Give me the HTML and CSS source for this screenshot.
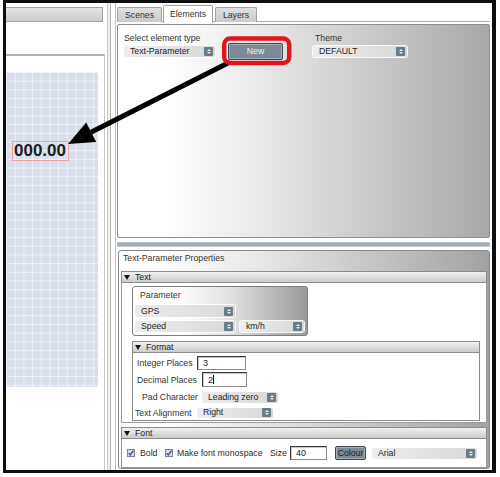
FILE: index.html
```html
<!DOCTYPE html>
<html>
<head>
<meta charset="utf-8">
<title>Overlay Editor</title>
<link rel="stylesheet" href="styles.css">
</head>
<body>
<div class="frame">
  <div class="left">
    <div class="left-bar"></div>
    <div class="left-head"></div>
    <div class="canvas-box">
      <div class="canvas-grid">
        <div class="element-label">000.00</div>
      </div>
    </div>
  </div>

  <div class="vsplit"></div>

  <div class="right">
    <div class="tabs">
      <div class="tab tab-scenes">Scenes</div>
      <div class="tab tab-elements active">Elements</div>
      <div class="tab tab-layers">Layers</div>
    </div>

    <div class="chooser">
      <div class="field field-type">
        <div class="label">Select element type</div>
        <div class="select">Text-Parameter<span class="spin"></span></div>
      </div>
      <div class="btn btn-new">New</div>
      <div class="field field-theme">
        <div class="label">Theme</div>
        <div class="select">DEFAULT<span class="spin"></span></div>
      </div>
    </div>

    <div class="hsplit"></div>

    <div class="props">
      <div class="props-title">Text-Parameter Properties</div>

      <div class="section">
        <div class="sec-head"><span class="caret"></span>Text</div>
        <div class="sec-body text-body">
          <div class="param-box">
            <div class="param-label">Parameter</div>
            <div class="select sel-gps">GPS<span class="spin"></span></div>
            <div class="param-row">
              <div class="select sel-speed">Speed<span class="spin"></span></div>
              <div class="select sel-unit">km/h<span class="spin"></span></div>
            </div>
          </div>

          <div class="format">
            <div class="sec-head"><span class="caret"></span>Format</div>
            <div class="format-body">
              <div class="frow frow-int">
                <span class="flabel">Integer Places</span>
                <div class="input">3</div>
              </div>
              <div class="frow frow-dec">
                <span class="flabel">Decimal Places</span>
                <div class="input">2<span class="text-caret"></span></div>
              </div>
              <div class="frow frow-pad">
                <span class="flabel">Pad Character</span>
                <div class="select">Leading zero<span class="spin"></span></div>
              </div>
              <div class="frow frow-align">
                <span class="flabel">Text Alignment</span>
                <div class="select">Right<span class="spin"></span></div>
              </div>
            </div>
          </div>
        </div>
      </div>

      <div class="section section-font">
        <div class="sec-head"><span class="caret"></span>Font</div>
        <div class="sec-body font-body">
          <svg class="check" width="8" height="8" viewBox="0 0 8 8"><rect x="0.5" y="0.5" width="7" height="7" fill="#d6dce9" stroke="#7b8494"/><path d="M1.7 4.1 L3.3 5.9 L6.4 1.7" fill="none" stroke="#3a48a6" stroke-width="1.3"/></svg>
          <span class="cb-label cb-bold">Bold</span>
          <svg class="check" width="8" height="8" viewBox="0 0 8 8"><rect x="0.5" y="0.5" width="7" height="7" fill="#d6dce9" stroke="#7b8494"/><path d="M1.7 4.1 L3.3 5.9 L6.4 1.7" fill="none" stroke="#3a48a6" stroke-width="1.3"/></svg>
          <span class="cb-label cb-mono">Make font monospace</span>
          <span class="size-label">Size</span>
          <div class="input input-size">40</div>
          <div class="btn btn-colour">Colour</div>
          <div class="select sel-font">Arial<span class="spin"></span></div>
        </div>
      </div>
    </div>
  </div>
</div>

<svg class="callout" width="500" height="477" viewBox="0 0 500 477">
  <line x1="230" y1="62" x2="91" y2="132.3" stroke="#000" stroke-width="5"/>
  <polygon points="68,144 96.2,142.1 86.2,122.4" fill="#000"/>
  <rect x="224.2" y="38.5" width="65" height="24.5" rx="6" ry="6" fill="none" stroke="#e3141b" stroke-width="4.5"/>
</svg>
</body>
</html>
```

FILE: styles.css
```css
* { box-sizing: border-box; }

html, body {
  margin: 0;
  padding: 0;
  background: #fff;
}

body {
  position: relative;
  width: 500px;
  height: 477px;
  overflow: hidden;
  font-family: "Liberation Sans", Arial, sans-serif;
  font-size: 8.7px;
  color: #2b2b2b;
}

/* window frame */
.frame {
  margin-left: 3px;
  width: 493px;
  height: 473px;
  border: 3px solid #0e0e0e;
  border-right-width: 4px;
  display: flex;
}

/* left: scene canvas */
.left {
  width: 99px;
  display: flex;
  flex-direction: column;
}

.left-bar {
  margin: 4px 2px 0 0;
  height: 15px;
  border: 1px solid #a4a4a4;
  border-left: 0;
  background: linear-gradient(#e3e3e3, #cdcdcd);
}

.left-head { height: 32px; }

.canvas-box {
  flex: 1;
  border-top: 2px solid #b2b2b2;
  border-right: 1px solid #c6c6c6;
  padding-top: 16px;
}

.canvas-grid {
  position: relative;
  width: 92px;
  height: 315px;
  background-color: #d8dfeb;
  background-image:
    linear-gradient(to right, rgba(255, 255, 255, 0.55) 1px, transparent 1px),
    linear-gradient(to bottom, rgba(255, 255, 255, 0.55) 1px, transparent 1px);
  background-size: 8.7px 8.7px;
}

.element-label {
  position: absolute;
  left: 6px;
  top: 69px;
  width: 57px;
  height: 20px;
  border: 1px solid #e9a2a2;
  padding-left: 1px;
  font-size: 17px;
  font-weight: bold;
  line-height: 18px;
  color: #1c1c1c;
}

/* vertical splitter */
.vsplit {
  width: 10px;
  background: linear-gradient(to right,
    #fff 0 2px, #c8c8c8 2px 3px, #f0f0f0 3px 5px,
    #b3b3b3 5px 6px, #fff 6px);
}

/* right: editor panels */
.right {
  flex: 1;
  display: flex;
  flex-direction: column;
  border-left: 1px solid #c2c2c2;
  padding: 0 2px 0 1px;
}

.tabs {
  height: 19px;
  margin-bottom: 2px;
  border-bottom: 1px solid #a9a9a9;
  display: flex;
  align-items: flex-end;
}

.tab {
  height: 15px;
  margin-bottom: -1px;
  border: 1px solid #a2a2a2;
  border-bottom: 0;
  border-radius: 2px 2px 0 0;
  background: linear-gradient(#e0e0e0, #cacaca);
  text-align: center;
  line-height: 14px;
  color: #333;
}

.tab-scenes { width: 45px; }
.tab-elements { width: 50px; margin-left: 1px; }
.tab-layers { width: 42px; margin-left: 2px; }

.tab.active {
  height: 18px;
  margin-bottom: -2px;
  background: #fff;
  line-height: 17px;
}

.chooser {
  height: 214px;
  border: 1px solid #8e8e8e;
  border-radius: 2px;
  background: linear-gradient(to right, #fff 12%, #e9e9e9 38%, #a8a8a8 100%);
  padding: 8px 0 0 6px;
  display: flex;
  align-items: flex-start;
}

.label {
  height: 10px;
  line-height: 10px;
  color: #333;
}

.field .select { margin-top: 3px; }
.field-type { width: 91px; }
.field-theme { width: 94px; margin-left: 30px; }
.field-theme .label { padding-left: 2px; }

/* dropdowns */
.select {
  display: flex;
  align-items: center;
  height: 11px;
  padding-left: 6px;
  border-radius: 2px;
  background: linear-gradient(to right, #ededed, #d8d8d8);
  box-shadow: 0 0 0 1px rgba(255, 255, 255, 0.9);
  color: #252525;
  line-height: 11px;
  white-space: nowrap;
}

.spin {
  margin-left: auto;
  margin-right: 2px;
  width: 9px;
  height: 9px;
  border-radius: 1px;
  background: #6b7c89;
  display: flex;
  flex-direction: column;
  align-items: center;
  justify-content: center;
  gap: 1px;
}

.spin::before,
.spin::after {
  content: "";
  width: 0;
  height: 0;
  border-left: 2px solid transparent;
  border-right: 2px solid transparent;
}

.spin::before { border-bottom: 2px solid #e6ecf0; }
.spin::after { border-top: 2px solid #e6ecf0; }

/* buttons */
.btn {
  border: 1px solid #3d4852;
  border-radius: 2px;
  background: #7b8a96;
  box-shadow: inset 0 0 0 1px #a4b0b9;
  text-align: center;
}

.btn-new {
  width: 55px;
  height: 17px;
  margin: 10px 0 0 13px;
  line-height: 15px;
  color: #f0f2f4;
}

.btn-colour {
  width: 31px;
  height: 14px;
  margin-left: 8px;
  line-height: 12px;
  color: #1b1b1b;
}

/* horizontal splitter */
.hsplit {
  height: 12px;
  background: linear-gradient(#fff 0 4px, #b8c1c8 4px 5px, #a3aeb7 5px 8px, #c6cdd3 8px 9px, #fff 9px);
}

/* properties panel */
.props {
  flex: 1;
  margin: 0 0 1px 1px;
  border: 1px solid #888;
  border-radius: 3px;
  background: linear-gradient(to right, #fff 10%, #e5e5e5 40%, #a2a2a2 100%);
  padding: 0 2px 0 2px;
  overflow: hidden;
}

.props-title {
  height: 20px;
  padding: 1px 0 0 2px;
  line-height: 13px;
  color: #333;
}

.sec-head {
  display: flex;
  align-items: center;
  height: 12px;
  border: 1px solid #8b8b8b;
  background: linear-gradient(#f1f1f1, #cccccc);
  padding-left: 2px;
  line-height: 10px;
  color: #222;
}

.caret {
  width: 0;
  height: 0;
  margin-right: 5px;
  border-left: 3px solid transparent;
  border-right: 3px solid transparent;
  border-top: 5px solid #141414;
}

.sec-body {
  background: #fff;
  border: 1px solid #9a9a9a;
  border-top: 0;
}

.text-body {
  padding: 3px 6px 1px 10px;
}

.param-box {
  width: 176px;
  height: 50px;
  border: 1px solid #7e7e7e;
  border-radius: 3px;
  background: linear-gradient(to right, #fff 25%, #e2e2e2 55%, #9a9a9a 100%);
  padding: 3px 0 0 2px;
}

.param-label {
  padding-left: 5px;
  height: 11px;
  line-height: 11px;
  color: #333;
}

.sel-gps { width: 100px; height: 12px; margin-top: 4px; }

.param-row {
  display: flex;
  margin-top: 4px;
}

.sel-speed { width: 100px; }
.sel-unit { width: 64px; margin-left: 5px; }

.format { margin-top: 5px; }

.format-body {
  border: 1px solid #8b8b8b;
  border-top: 0;
  padding: 3px 0 2px 0;
}

.frow {
  display: flex;
  align-items: center;
  white-space: nowrap;
}

.flabel { color: #333; }

.input {
  height: 100%;
  background: #fff;
  border: 1px solid #8a8a8a;
  border-top-color: #3b3b3b;
  border-left-color: #3b3b3b;
  box-shadow: inset 1px 1px 0 #c4c4c4;
  padding-left: 5px;
  display: flex;
  align-items: center;
  font-size: 9px;
  color: #222;
}

.text-caret {
  width: 1px;
  height: 9px;
  background: #111;
}

.frow-int { height: 14px; }
.frow-int .flabel { width: 60px; margin-left: 4px; }
.frow-int .input { width: 49px; }

.frow-dec { height: 15px; margin-top: 2px; }
.frow-dec .flabel { width: 65px; margin-left: 4px; }
.frow-dec .input { width: 45px; }

.frow-pad { height: 12px; margin-top: 4px; }
.frow-pad .flabel { width: 60px; margin-left: 9px; }
.frow-pad .select { width: 76px; height: 11px; }

.frow-align { height: 11px; margin-top: 4px; }
.frow-align .flabel { width: 62px; margin-left: 2px; }
.frow-align .select { width: 76px; height: 10px; }

.section-font { margin-top: 4px; }

.font-body {
  height: 29px;
  display: flex;
  align-items: center;
  padding-left: 5px;
  white-space: nowrap;
}

.check { flex: none; }

.cb-label { color: #2b2b2b; }
.cb-bold { width: 25px; margin-left: 5px; }
.cb-mono { width: 93px; margin-left: 4px; }
.size-label { width: 20px; }

.input-size { width: 37px; height: 14px; }

.sel-font { width: 105px; margin-left: 6px; }

/* callout drawn over the editor */
.callout {
  position: absolute;
  left: 0;
  top: 0;
  pointer-events: none;
}
```
